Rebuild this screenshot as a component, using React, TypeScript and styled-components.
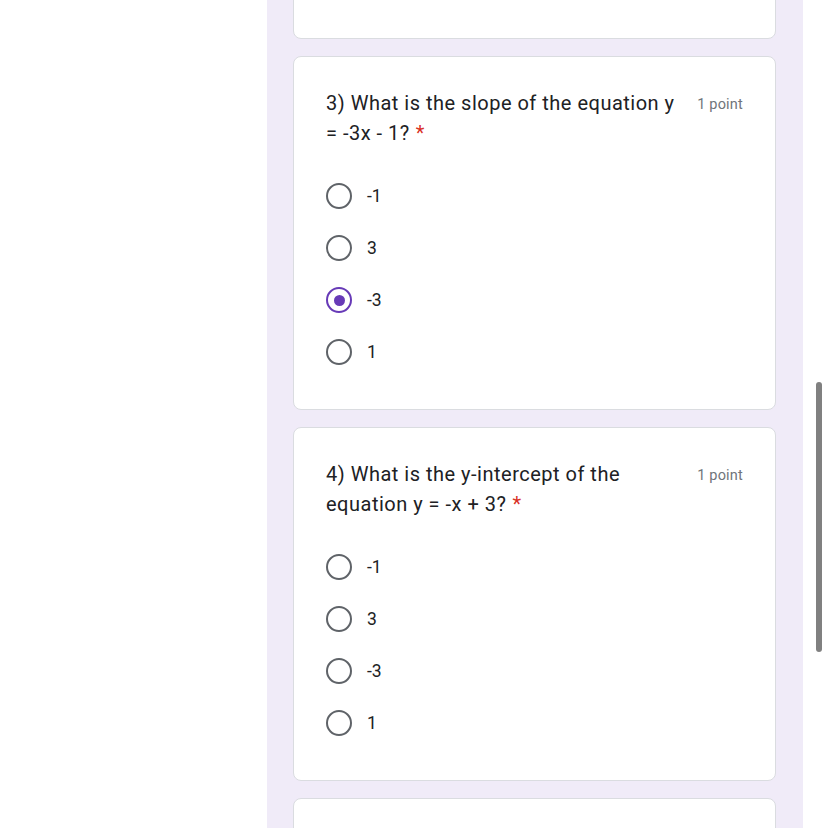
import React from "react";
import styled, { createGlobalStyle } from "styled-components";

const GlobalStyle = createGlobalStyle`
  html, body {
    margin: 0;
    padding: 0;
    background: #ffffff;
    overflow: hidden;
  }
  * {
    box-sizing: border-box;
  }
`;

type Question = {
  id: number;
  title: string;
  options: string[];
  selected: number | null;
};

const questions: Question[] = [
  {
    id: 3,
    title: "3) What is the slope of the equation y = -3x - 1?",
    options: ["-1", "3", "-3", "1"],
    selected: 2,
  },
  {
    id: 4,
    title: "4) What is the y-intercept of the equation y = -x + 3?",
    options: ["-1", "3", "-3", "1"],
    selected: null,
  },
];

const Page = styled.div`
  position: relative;
  display: flex;
  width: 828px;
  height: 828px;
  overflow: hidden;
  font-family: Roboto, "Liberation Sans", Arial, sans-serif;
`;

const Blank = styled.div`
  width: 267px;
  flex-shrink: 0;
  background: #ffffff;
`;

const FormColumn = styled.div`
  width: 536px;
  flex-shrink: 0;
  background: #f0ebf8;
  padding: 0 27px 0 26px;
  display: flex;
  flex-direction: column;
  gap: 17px;
`;

const Gutter = styled.div`
  flex: 1;
  background: #ffffff;
`;

const Scrollbar = styled.div`
  position: absolute;
  left: 816px;
  top: 382px;
  width: 6px;
  height: 270px;
  border-radius: 3px;
  background: #808080;
`;

const Card = styled.div<{ $stub?: "top" | "bottom" }>`
  flex-shrink: 0;
  background: #ffffff;
  border: 1px solid #dadce0;
  border-radius: 8px;
  padding: 31px 32px 31px;
  ${(p) => p.$stub === "top" && "height: 60px; margin-top: -21px; padding: 0;"}
  ${(p) => p.$stub === "bottom" && "height: 120px; padding: 0;"}
`;

const Header = styled.div`
  display: flex;
  align-items: flex-start;
  gap: 16px;
`;

const Title = styled.div`
  flex: 1;
  font-size: 20px;
  line-height: 30px;
  color: #202124;
  letter-spacing: 0.5px;
`;

const Required = styled.span`
  color: #d93025;
  margin-left: 6px;
`;

const Points = styled.div`
  width: 48px;
  flex-shrink: 0;
  padding-top: 2px;
  text-align: right;
  font-size: 14.5px;
  line-height: 30px;
  color: #70757a;
  white-space: nowrap;
  letter-spacing: 0.2px;
`;

const Options = styled.div`
  margin-top: 22px;
  display: flex;
  flex-direction: column;
`;

const OptionRow = styled.label`
  display: flex;
  align-items: center;
  gap: 15px;
  height: 52px;
`;

const Radio = styled.span<{ $checked: boolean }>`
  width: 26px;
  height: 26px;
  border-radius: 50%;
  border: 2.5px solid ${(p) => (p.$checked ? "#673ab7" : "#5f6368")};
  display: flex;
  align-items: center;
  justify-content: center;
  flex-shrink: 0;

  &::after {
    content: "";
    width: 11px;
    height: 11px;
    border-radius: 50%;
    background: #673ab7;
    display: ${(p) => (p.$checked ? "block" : "none")};
  }
`;

const OptionLabel = styled.span`
  font-size: 17.5px;
  color: #202124;
`;

const QuestionCard: React.FC<{ q: Question }> = ({ q }) => (
  <Card>
    <Header>
      <Title>
        {q.title}
        <Required>*</Required>
      </Title>
      <Points>1 point</Points>
    </Header>
    <Options>
      {q.options.map((opt, i) => (
        <OptionRow key={i}>
          <Radio $checked={q.selected === i} />
          <OptionLabel>{opt}</OptionLabel>
        </OptionRow>
      ))}
    </Options>
  </Card>
);

export default function App() {
  return (
    <>
      <GlobalStyle />
      <Page>
        <Blank />
        <FormColumn>
          <Card $stub="top" />
          {questions.map((q) => (
            <QuestionCard key={q.id} q={q} />
          ))}
          <Card $stub="bottom" />
        </FormColumn>
        <Gutter />
        <Scrollbar />
      </Page>
    </>
  );
}
